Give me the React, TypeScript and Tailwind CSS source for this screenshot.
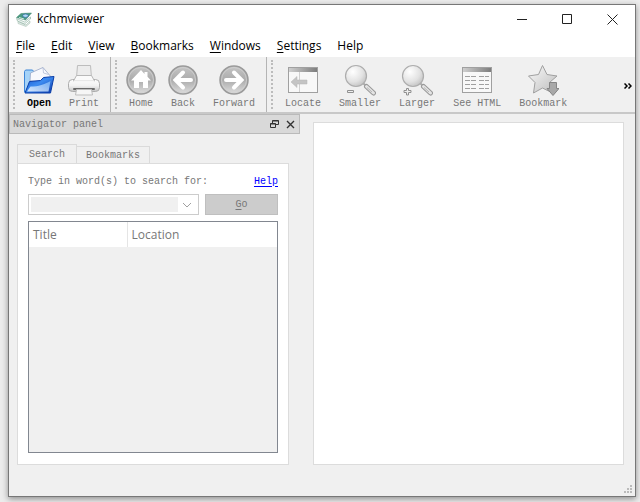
import React from 'react';

interface ToolButtonProps {
    label: string;
    icon: React.ReactNode;
    active?: boolean;
}

const menus = [
    { key: 'F', rest: 'ile' },
    { key: 'E', rest: 'dit' },
    { key: 'V', rest: 'iew' },
    { key: 'B', rest: 'ookmarks' },
    { key: 'W', rest: 'indows' },
    { key: 'S', rest: 'ettings' },
    { key: '', rest: 'Help' },
];

const AppIcon = () => (
    <svg className="h-4 w-4" viewBox="0 0 16 16" aria-hidden="true">
        <path d="M2 10l8 4 4-4v2l-4 3.5-8-3z" fill="#dfe9e4" stroke="#9db8ab" strokeWidth=".5" />
        <path d="M.5 7.500l8 3.500 6-5v2l-6 5-7-3z" fill="#f4f8f6" stroke="#6d9c88" strokeWidth=".5" />
        <path d="M.5 6.500L5 2.500l10.500-.5-6 7z" fill="#4a9a80" stroke="#3d8069" strokeWidth=".5" />
        <ellipse cx="9.500" cy="4.700" rx="2.800" ry="1.700" fill="#b3d8f2" stroke="#2a67a8" strokeWidth=".7" />
        <path d="M3 6.500l5 1.500" stroke="#d4ebe0" />
    </svg>
);

const OpenIcon = () => (
    <svg className="h-8 w-8" viewBox="0 0 32 32" aria-hidden="true">
        <defs>
            <linearGradient id="folder" x1="0" y1="0" x2="1" y2="1">
                <stop offset="0" stopColor="#1553cf" />
                <stop offset=".45" stopColor="#3c8bf0" />
                <stop offset="1" stopColor="#0a36a8" />
            </linearGradient>
            <linearGradient id="shine" x1="0" y1="1" x2="1" y2="0">
                <stop offset="0" stopColor="#fff" />
                <stop offset="1" stopColor="#7db9fb" />
            </linearGradient>
        </defs>
        <path d="M1.500 28V7.500l1-1.500h7l2 2.500h5V28z" fill="#a5d3f8" stroke="#3d86d8" />
        <path d="M7 17l.5-8L20 3.500 29 14l-2 4z" fill="#f7f8fd" stroke="#98a6c6" strokeWidth=".8" />
        <path d="M20 3.500l.5 5.500 5 1.500" fill="none" stroke="#a9b5d0" strokeWidth=".7" />
        <path d="M6.500 17.500l11-1 3-3 10.500-1-3.500 16.500H2z" fill="url(#folder)" stroke="#0b3ea8" />
        <path d="M4 27.500l3.500-5c8 0 14-2 20-5.500l-2 10.500z" fill="url(#shine)" opacity=".8" />
    </svg>
);

const PrintIcon = () => (
    <svg className="h-8 w-8" viewBox="0 0 32 32" aria-hidden="true">
        <defs>
            <linearGradient id="printer" x1="0" y1="0" x2="0" y2="1">
                <stop offset="0" stopColor="#fdfdfd" />
                <stop offset=".5" stopColor="#f2f2f2" />
                <stop offset="1" stopColor="#c4c4c4" />
            </linearGradient>
        </defs>
        <path d="M9.500 1.500h13l1 12h-15z" fill="#ececec" stroke="#bdbdbd" />
        <rect x=".5" y="15.500" width="31" height="12" rx="4" fill="url(#printer)" stroke="#adadad" />
        <path d="M8.500 11.500h15l3 5.500h-21z" fill="#fafafa" stroke="#b8b8b8" strokeLinejoin="round" />
        <path d="M6 17.500h20" stroke="#f6f6f6" strokeWidth="2" />
        <path d="M6 25h20" stroke="#6a6a6a" strokeWidth="2" strokeLinecap="round" />
        <path d="M8.500 25.500h15l1 5.500h-17z" fill="#f6f6f6" stroke="#bdbdbd" />
    </svg>
);

const RoundIcon = ({ children }: { children: React.ReactNode }) => (
    <svg className="h-8 w-8" viewBox="0 0 32 32" aria-hidden="true">
        <defs>
            <linearGradient id="disc" x1="0" y1="0" x2="0" y2="1">
                <stop offset="0" stopColor="#c6c6c6" />
                <stop offset=".5" stopColor="#ababab" />
                <stop offset="1" stopColor="#dedede" />
            </linearGradient>
        </defs>
        <circle cx="16" cy="16" r="14" fill="url(#disc)" stroke="#9a9a9a" strokeWidth="1.500" />
        <circle cx="16" cy="16" r="12.500" fill="none" stroke="#d0d0d0" strokeWidth=".8" />
        {children}
    </svg>
);

const HomeIcon = () => (
    <RoundIcon>
        <path d="M16 6L6 16.500h3V24h5v-6h4v6h5v-7.500h3l-3.500-3.700V8h-3v2z" fill="#fff" />
    </RoundIcon>
);

const BackIcon = () => (
    <RoundIcon>
        <path d="M16 8.500L8.500 16l7.500 7.500M9 16h15" fill="none" stroke="#fff" strokeWidth="4" strokeLinecap="round" />
    </RoundIcon>
);

const ForwardIcon = () => (
    <RoundIcon>
        <path d="M16 8.500l7.500 7.500-7.500 7.500M23 16H8" fill="none" stroke="#fff" strokeWidth="4" strokeLinecap="round" />
    </RoundIcon>
);

const WindowFrame = ({ children }: { children: React.ReactNode }) => (
    <svg className="h-8 w-8" viewBox="0 0 32 32" aria-hidden="true">
        <defs>
            <linearGradient id="caption" x1="0" y1="0" x2="1" y2="0">
                <stop offset="0" stopColor="#cfcfcf" />
                <stop offset="1" stopColor="#7d7d7d" />
            </linearGradient>
        </defs>
        <rect x="1.500" y="3.500" width="29" height="25" fill="#f8f8f8" stroke="#a0a0a0" />
        <rect x="2" y="4" width="28" height="4" fill="url(#caption)" />
        {children}
    </svg>
);

const LocateIcon = () => (
    <WindowFrame>
        <path d="M12.500 8v20" stroke="#d0d0d0" />
        <path d="M4 18l6-5.500V16h10v4H10v3.500z" fill="#c4c4c4" stroke="#b4b4b4" strokeWidth=".5" />
    </WindowFrame>
);

const HtmlIcon = () => (
    <WindowFrame>
        <path
            d="M4 12.500h11M4 16.500h11M4 20.500h11M4 24.500h11M18 12.500h10M18 16.500h10M18 20.500h10M18 24.500h10"
            stroke="#a0a0a0"
            strokeDasharray="5 1"
        />
    </WindowFrame>
);

const ZoomIcon = ({ plus }: { plus?: boolean }) => (
    <svg className="h-8 w-8" viewBox="0 0 32 32" aria-hidden="true">
        <defs>
            <radialGradient id="lens" cx=".35" cy=".3" r=".8">
                <stop offset="0" stopColor="#fff" />
                <stop offset=".6" stopColor="#e2e2e2" />
                <stop offset="1" stopColor="#bcbcbc" />
            </radialGradient>
        </defs>
        <path d="M19 19l3 3" stroke="#aaa" strokeWidth="2" />
        <path d="M22.500 22.500l7 6.500" stroke="#999" strokeWidth="5" strokeLinecap="round" />
        <path d="M22.500 22.500l7 6.500" stroke="#e4e4e4" strokeWidth="3" strokeLinecap="round" />
        <path d="M23 23.500l5 4.500" stroke="#b8b8b8" />
        <circle cx="12" cy="12" r="10.500" fill="url(#lens)" stroke="#adadad" strokeWidth="1.200" />
        {plus ? (
            <path d="M5.500 24.500h2v2h2.500v2H7.500v2.500h-2v-2.500H3v-2h2.500z" fill="#eee" stroke="#909090" />
        ) : (
            <path d="M3.500 26.500h6v2h-6z" fill="#eee" stroke="#909090" />
        )}
    </svg>
);

const BookmarkIcon = () => (
    <svg className="h-8 w-8" viewBox="0 0 32 32" aria-hidden="true">
        <defs>
            <linearGradient id="star" x1="0" y1="0" x2="1" y2="1">
                <stop offset="0" stopColor="#fafafa" />
                <stop offset="1" stopColor="#bdbdbd" />
            </linearGradient>
        </defs>
        <path
            d="M15.500 1.500l4.500 9 10 1.500-7.500 6.500 2 10-9-4.500-9 5 1.500-10.500L1.500 12l10-1.500z"
            fill="url(#star)"
            stroke="#a0a0a0"
            strokeLinejoin="round"
        />
        <path d="M22.500 18.500h7v6H32L26 31.500 20 24.500h2.500z" fill="#a8a8a8" stroke="#858585" strokeLinejoin="round" />
    </svg>
);

const ToolButton: React.FC<ToolButtonProps> = ({ label, icon, active = false }) => (
    <button
        type="button"
        disabled={!active}
        className="flex shrink-0 flex-col items-center px-[9px] pt-[7px] font-['Liberation_Mono',monospace] text-[10px] leading-4 text-[#777] enabled:font-bold enabled:text-black"
    >
        <span className="-mx-1">{icon}</span>
        <span className="whitespace-nowrap">{label}</span>
    </button>
);

const ToolGroup = ({ children, last }: { children: React.ReactNode; last?: boolean }) => (
    <div className="flex shrink-0">
        <div className="flex w-[9px] justify-center py-[3px]">
            <div className="w-0 border-l-2 border-dotted border-[#bcbcbc]" />
        </div>
        {children}
        {!last && <div className="w-[3px] border-r border-[#b4b4b4]" />}
    </div>
);

const TitleBar = () => (
    <header className="flex h-7 items-center bg-white pl-[7px] text-black">
        <AppIcon />
        <h1 className="ml-[5px] flex-1 text-[12px]">kchmviewer</h1>
        <button type="button" aria-label="Minimize" className="flex h-7 w-[45px] items-center justify-center">
            <svg width="11" height="11" viewBox="0 0 11 11"><path d="M0 5.500h10" stroke="#222" /></svg>
        </button>
        <button type="button" aria-label="Maximize" className="flex h-7 w-[45px] items-center justify-center">
            <svg width="11" height="11" viewBox="0 0 11 11"><path d="M.5.5h9v9h-9z" fill="none" stroke="#222" /></svg>
        </button>
        <button type="button" aria-label="Close" className="flex h-7 w-[45px] items-center justify-center">
            <svg width="11" height="11" viewBox="0 0 11 11"><path d="M.5.5l10 10M10.500.5l-10 10" stroke="#222" /></svg>
        </button>
    </header>
);

const MenuBar = () => (
    <nav className="flex h-6 items-center gap-4 bg-white pt-[2px] pl-[7px] text-[12px] text-black">
        {menus.map((m) => (
            <button type="button" key={m.key + m.rest}>
                {m.key && <span className="underline underline-offset-2">{m.key}</span>}
                {m.rest}
            </button>
        ))}
    </nav>
);

const ToolBar = () => (
    <div className="flex h-[57px] border-b-2 border-[#c8c8c8] bg-[#f0f0f0]">
        <ToolGroup>
            <ToolButton label="Open" icon={<OpenIcon />} active />
            <ToolButton label="Print" icon={<PrintIcon />} />
        </ToolGroup>
        <ToolGroup>
            <ToolButton label="Home" icon={<HomeIcon />} />
            <ToolButton label="Back" icon={<BackIcon />} />
            <ToolButton label="Forward" icon={<ForwardIcon />} />
        </ToolGroup>
        <ToolGroup last>
            <ToolButton label="Locate" icon={<LocateIcon />} />
            <ToolButton label="Smaller" icon={<ZoomIcon />} />
            <ToolButton label="Larger" icon={<ZoomIcon plus />} />
            <ToolButton label="See HTML" icon={<HtmlIcon />} />
            <ToolButton label="Bookmark" icon={<BookmarkIcon />} />
        </ToolGroup>
        <button type="button" aria-label="More tools" className="ml-auto flex items-center pt-[2px] pr-[3px]">
            <svg width="8" height="6" viewBox="0 0 8 6">
                <path d="M.5.5L3 3 .5 5.500M4.500.5L7 3 4.500 5.500" fill="none" stroke="#000" strokeWidth="1.500" />
            </svg>
        </button>
    </div>
);

const SearchPanel = () => (
    <div className="flex flex-1 flex-col border border-[#dcdcdc] bg-white px-[10px] pt-[9px] pb-[11px]">
        <div className="flex h-4 items-center justify-between">
            <label htmlFor="query">Type in word(s) to search for:</label>
            <a href="#help" className="text-[#0000ff] underline underline-offset-2">Help</a>
        </div>
        <div className="mt-[5px] flex gap-[6px]">
            <div className="flex h-[21px] flex-1 items-center border border-[#ccc] bg-white p-[2px]">
                <select id="query" disabled className="h-full min-w-0 flex-1 appearance-none bg-[#f0f0f0]" />
                <svg className="mx-1" width="10" height="6" viewBox="0 0 10 6" aria-hidden="true">
                    <path d="M1 1l4 4 4-4" fill="none" stroke="#a0a0a0" />
                </svg>
            </div>
            <button type="button" disabled className="h-[21px] w-[73px] border border-[#bfbfbf] bg-[#ccc]">
                <span className="underline underline-offset-2">G</span>o
            </button>
        </div>
        <div className="mt-[6px] flex-1 border border-[#828790] bg-[#f0f0f0]">
            <table className="w-full table-fixed border-collapse bg-white text-left font-['Open_Sans','Noto_Sans',sans-serif] text-[12px]">
                <thead>
                    <tr className="h-[25px]">
                        <th className="w-[98px] border-r border-[#e5e5e5] pl-1 font-normal">Title</th>
                        <th className="pl-1 font-normal">Location</th>
                    </tr>
                </thead>
            </table>
        </div>
    </div>
);

const NavigatorPanel = () => (
    <aside className="flex w-[291px] shrink-0 flex-col font-['Liberation_Mono',monospace] text-[10px] text-[#777]">
        <div className="flex h-5 items-center border border-[#bababa] bg-[#d9d9d9] pr-1 pl-[3px]">
            <h2 className="flex-1">Navigator panel</h2>
            <button type="button" aria-label="Float panel" className="mr-[7px]">
                <svg width="9" height="9" viewBox="0 0 9 9">
                    <path d="M2.500 3V.5h6v4H6M2.500 1h6M.5 3.500h5v4h-5zM.5 4h5" fill="none" stroke="#333" />
                </svg>
            </button>
            <button type="button" aria-label="Close panel">
                <svg width="9" height="9" viewBox="0 0 9 9">
                    <path d="M1 1l7 7M8 1L1 8" stroke="#333" strokeWidth="1.400" />
                </svg>
            </button>
        </div>
        <div className="flex flex-1 flex-col pt-[10px] pr-[11px] pl-2">
            <div role="tablist" className="flex items-end">
                <button type="button" role="tab" aria-selected="true" className="h-[19px] border border-b-0 border-[#dadada] px-[11px]">
                    Search
                </button>
                <button type="button" role="tab" aria-selected="false" className="h-[17px] border border-b-0 border-l-0 border-[#dadada] px-[9px]">
                    Bookmarks
                </button>
            </div>
            <SearchPanel />
        </div>
    </aside>
);

const SizeGrip = () => (
    <svg width="9" height="9" viewBox="0 0 9 9" aria-hidden="true">
        <path d="M6 0h2v2H6zM3 3h2v2H3zM6 3h2v2H6zM0 6h2v2H0zM3 6h2v2H3zM6 6h2v2H6z" fill="#bbb" />
    </svg>
);

const App: React.FC = () => {
    return (
        <div className="flex min-h-screen flex-col bg-[#ececec] pt-1 pr-1 pb-[5px] pl-2 font-['Open_Sans','Noto_Sans',sans-serif]">
            <div className="flex flex-1 flex-col border border-[#777] bg-[#f0f0f0] shadow-[0_2px_6px_rgba(0,0,0,0.4)]">
                <TitleBar />
                <MenuBar />
                <ToolBar />
                <div className="flex flex-1">
                    <NavigatorPanel />
                    <main className="mt-2 mr-[11px] ml-[13px] flex-1 border border-[#dcdcdc] bg-white" />
                </div>
                <footer className="flex h-[31px] items-end justify-end pr-[2px] pb-[2px]">
                    <SizeGrip />
                </footer>
            </div>
        </div>
    );
};

export default App;
